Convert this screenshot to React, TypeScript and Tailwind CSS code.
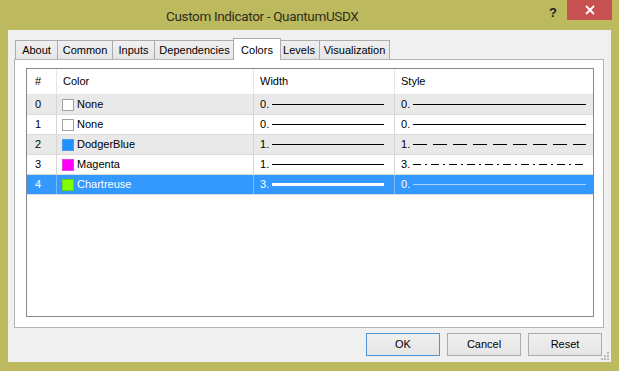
import type { ReactNode } from "react";

type Row = {
  index: number;
  name: string;
  swatch: string;
  width: number;
  style: number;
  selected?: boolean;
};

const ROWS: Row[] = [
  { index: 0, name: "None", swatch: "bg-white border-[#a0a0a0]", width: 0, style: 0 },
  { index: 1, name: "None", swatch: "bg-white border-[#a0a0a0]", width: 0, style: 0 },
  { index: 2, name: "DodgerBlue", swatch: "bg-[#1e90ff] border-[#4a9ee8]", width: 1, style: 1 },
  { index: 3, name: "Magenta", swatch: "bg-[#ff00ff] border-[#e040e0]", width: 1, style: 3 },
  { index: 4, name: "Chartreuse", swatch: "bg-[#7fff00] border-[#6fd010]", width: 3, style: 0, selected: true },
];

const TABS = [
  { label: "About", w: "w-[43px]" },
  { label: "Common", w: "w-[56px]" },
  { label: "Inputs", w: "w-[43px]" },
  { label: "Dependencies", w: "w-[81px]" },
  { label: "Colors", w: "w-[48px]", active: true },
  { label: "Levels", w: "w-[42px]" },
  { label: "Visualization", w: "w-[71px]" },
];

const DASHES: Record<number, string | undefined> = {
  0: undefined,
  1: "14 6",
  3: "8 4 2 4",
};

function Stroke({ thick, dash, color }: { thick: number; dash?: string; color: string }) {
  return (
    <svg className="h-[5px] w-0 min-w-0 flex-1" shapeRendering="crispEdges">
      <line x1="0" x2="100%" y1="2.5" y2="2.5" stroke={color} strokeWidth={thick} strokeDasharray={dash} />
    </svg>
  );
}

function Cell({ className, children }: { className: string; children: ReactNode }) {
  return <div className={`flex h-full shrink-0 items-center ${className}`}>{children}</div>;
}

function TableRow({ row }: { row: Row }) {
  const striped = row.index % 2 === 0;
  const bg = row.selected ? "bg-[#3399ff] text-white" : striped ? "bg-[#e9e9e9]" : "bg-white";
  const sep = row.selected ? "border-[#7ab8f5]" : "border-[#d6d6d6]";
  const lineColor = row.selected ? "#ffffff" : "#000000";
  const styleColor = row.selected ? "#a9d2fb" : "#000000";
  return (
    <div className={`flex h-[20px] border-b border-[#dcdcdc] ${bg}`}>
      <Cell className={`w-[30px] border-r pl-[8px] ${sep}`}>{row.index}</Cell>
      <Cell className={`w-[197px] border-r pl-[5px] ${sep}`}>
        <span className={`mr-[3px] h-[12px] w-[12px] border ${row.swatch}`} />
        {row.name}
      </Cell>
      <Cell className={`w-[141px] border-r pl-[6px] pr-[10px] ${sep}`}>
        <span className="mr-[3px]">{row.width}.</span>
        <Stroke thick={row.width === 3 ? 3 : 1} color={lineColor} />
      </Cell>
      <Cell className="w-[199px] pl-[6px] pr-[8px]">
        <span className="mr-[3px]">{row.style}.</span>
        <Stroke thick={1} dash={DASHES[row.style]} color={styleColor} />
      </Cell>
    </div>
  );
}

export default function App() {
  return (
    <div className="flex h-[371px] w-[619px] flex-col overflow-hidden bg-[#bcb95f] font-['Liberation_Sans',Arial,sans-serif] text-[11px] text-black">
      {/* title bar */}
      <div className="flex h-[30px] items-start">
        <div className="ml-[166px] mt-[6px] font-['Roboto',sans-serif] text-[13.5px] tracking-[-0.35px] text-[#2e2e1a]">
          Custom Indicator - QuantumUSDX
        </div>
        <div className="ml-auto mt-[3px] text-[13px] font-bold text-[#222]">?</div>
        <div className="ml-[10px] mr-[7px] flex h-[20px] w-[45px] items-center justify-center bg-[#c75050]">
          <svg width="10" height="10" viewBox="0 0 10 10">
            <path d="M1 1 L9 9 M9 1 L1 9" stroke="#fff" strokeWidth="1.8" />
          </svg>
        </div>
      </div>

      {/* client area */}
      <div className="relative mx-[8px] flex h-[332px] flex-col bg-[#f0f0f0] pl-[6px] pr-[7px] pt-[8px]">
        <div className="flex h-[21px] items-end pl-[2px]">
          {TABS.map((tab) =>
            tab.active ? (
              <div
                key={tab.label}
                className={`relative z-10 -mx-[2px] -mb-px flex h-[22px] items-start justify-center border border-b-0 border-[#acacac] bg-white pt-[3px] ${tab.w}`}
              >
                {tab.label}
              </div>
            ) : (
              <div
                key={tab.label}
                className={`-ml-px flex h-[19px] items-center justify-center border border-b-0 border-[#acacac] bg-gradient-to-b from-[#f0f0f0] to-[#e5e5e5] ${tab.w}`}
              >
                {tab.label}
              </div>
            ),
          )}
        </div>

        <div className="flex h-[269px] flex-col border border-[#b4b4b4] bg-white pb-[10px] pl-[11px] pr-[9px] pt-[8px]">
          <div className="flex-1 overflow-hidden border border-[#828790] bg-white">
            <div className="flex h-[26px] border-b border-[#e5e5e5]">
              <Cell className="w-[30px] border-r border-[#e5e5e5] pl-[8px]">#</Cell>
              <Cell className="w-[197px] border-r border-[#e5e5e5] pl-[6px]">Color</Cell>
              <Cell className="w-[141px] border-r border-[#e5e5e5] pl-[6px]">Width</Cell>
              <Cell className="w-[199px] pl-[6px]">Style</Cell>
            </div>
            {ROWS.map((row) => (
              <TableRow key={row.index} row={row} />
            ))}
          </div>
        </div>

        <div className="mt-[5px] flex justify-end gap-[7px] pr-[2px]">
          {["OK", "Cancel", "Reset"].map((label) => (
            <button
              key={label}
              type="button"
              className={`h-[23px] w-[74px] border bg-gradient-to-b from-[#f0f0f0] to-[#e5e5e5] text-[11px] ${
                label === "OK" ? "border-[#4d95d8]" : "border-[#acacac]"
              }`}
            >
              {label}
            </button>
          ))}
        </div>

        <svg className="absolute bottom-[2px] right-[2px]" width="8" height="8" viewBox="0 0 8 8">
          <g fill="#b8b8b8">
            <rect x="6" y="0" width="2" height="2" />
            <rect x="3" y="3" width="2" height="2" />
            <rect x="6" y="3" width="2" height="2" />
            <rect x="0" y="6" width="2" height="2" />
            <rect x="3" y="6" width="2" height="2" />
            <rect x="6" y="6" width="2" height="2" />
          </g>
        </svg>
      </div>
    </div>
  );
}
